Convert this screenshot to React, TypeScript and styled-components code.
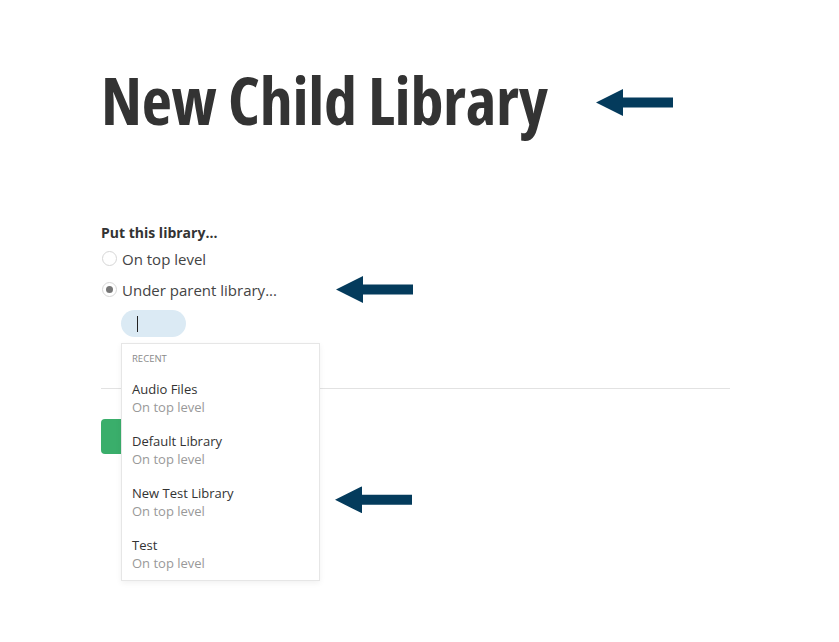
import React from 'react';
import styled, { createGlobalStyle } from 'styled-components';

const GlobalStyle = createGlobalStyle`
  body {
    margin: 0;
    background: #fff;
    font-family: "Open Sans", "Liberation Sans", sans-serif;
    color: #333;
  }
`;

const Page = styled.div`
  padding: 66px 0 0 101px;
  min-height: 642px;
  box-sizing: border-box;
`;

const TitleRow = styled.div`
  display: flex;
  align-items: center;
  gap: 48px;
`;

const Title = styled.h1`
  margin: 0;
  font-size: 66px;
  line-height: 66px;
  font-weight: 700;
  font-stretch: 75%;
  color: #333;
  letter-spacing: -0.3px;
`;

const Section = styled.div`
  margin-top: 91px;
`;

const FieldLabel = styled.div`
  font-size: 14px;
  line-height: 20px;
  font-weight: 700;
  color: #333;
`;

const RadioRow = styled.label`
  display: flex;
  align-items: center;
  height: 31px;
  font-size: 15px;
  color: #444;
`;

const RadioCircle = styled.span<{ $checked?: boolean }>`
  width: 15px;
  height: 15px;
  box-sizing: border-box;
  border-radius: 50%;
  border: 1px solid #d6d6d6;
  margin: 0 5px 0 1px;
  display: flex;
  align-items: center;
  justify-content: center;
  background: #fff;
  &::after {
    content: '';
    display: ${p => (p.$checked ? 'block' : 'none')};
    width: 7px;
    height: 7px;
    border-radius: 50%;
    background: #777;
  }
`;

const ArrowSlot = styled.span<{ $left: number; $top?: number }>`
  display: flex;
  margin-left: ${p => p.$left}px;
  margin-top: ${p => p.$top ?? 0}px;
`;

const PickerWrap = styled.div`
  position: relative;
  margin: 5px 0 0 20px;
  width: 65px;
`;

const SearchPill = styled.div`
  height: 27px;
  width: 65px;
  border-radius: 14px;
  background: #dbeaf4;
  display: flex;
  align-items: center;
  padding-left: 16px;
  box-sizing: border-box;
`;

const Caret = styled.span`
  width: 1px;
  height: 16px;
  background: #222;
`;

const Dropdown = styled.div`
  position: absolute;
  top: calc(100% + 6px);
  left: 0;
  width: 199px;
  box-sizing: border-box;
  background: #fff;
  border: 1px solid #e6e6e6;
  box-shadow: 0 2px 6px rgba(0, 0, 0, 0.06);
  padding-top: 7px;
  z-index: 5;
`;

const DropdownHeader = styled.div`
  font-size: 9.5px;
  line-height: 16px;
  color: #8a8a8a;
  padding: 0 10px;
  margin-bottom: 5px;
  text-transform: uppercase;
`;

const Item = styled.div`
  position: relative;
  padding: 8px 10px;
`;

const ItemTitle = styled.div`
  font-size: 13px;
  line-height: 18px;
  color: #333;
`;

const ItemSub = styled.div`
  font-size: 13px;
  line-height: 18px;
  color: #999;
`;

const ItemArrow = styled.span`
  position: absolute;
  left: calc(100% + 16px);
  top: 50%;
  transform: translateY(-58%);
  display: flex;
`;

const Divider = styled.div`
  margin-top: 51px;
  width: 629px;
  height: 1px;
  background: #e2e2e2;
`;

const SubmitButton = styled.button`
  margin-top: 30px;
  width: 110px;
  height: 35px;
  border: none;
  border-radius: 4px;
  background: #3aae6b;
  color: #fff;
  font-family: inherit;
  font-size: 14px;
`;

const Arrow: React.FC = () => (
  <svg width="77" height="27" viewBox="0 0 77 27">
    <path d="M0 13.5 L27 0 L27 8.5 L77 8.5 L77 18.5 L27 18.5 L27 27 Z" fill="#043b5c" />
  </svg>
);

const recent = ['Audio Files', 'Default Library', 'New Test Library', 'Test'];

const App: React.FC = () => (
  <>
    <GlobalStyle />
    <Page>
      <TitleRow>
        <Title>New Child Library</Title>
        <ArrowSlot $left={0} $top={6}>
          <Arrow />
        </ArrowSlot>
      </TitleRow>

      <Section>
        <FieldLabel>Put this library...</FieldLabel>
        <RadioRow>
          <RadioCircle />
          On top level
        </RadioRow>
        <RadioRow>
          <RadioCircle $checked />
          Under parent library...
          <ArrowSlot $left={59}>
            <Arrow />
          </ArrowSlot>
        </RadioRow>

        <PickerWrap>
          <SearchPill>
            <Caret />
          </SearchPill>
          <Dropdown>
            <DropdownHeader>Recent</DropdownHeader>
            {recent.map(name => (
              <Item key={name}>
                <ItemTitle>{name}</ItemTitle>
                <ItemSub>On top level</ItemSub>
                {name === 'New Test Library' && (
                  <ItemArrow>
                    <Arrow />
                  </ItemArrow>
                )}
              </Item>
            ))}
          </Dropdown>
        </PickerWrap>

        <Divider />
        <SubmitButton>Create</SubmitButton>
      </Section>
    </Page>
  </>
);

export default App;
